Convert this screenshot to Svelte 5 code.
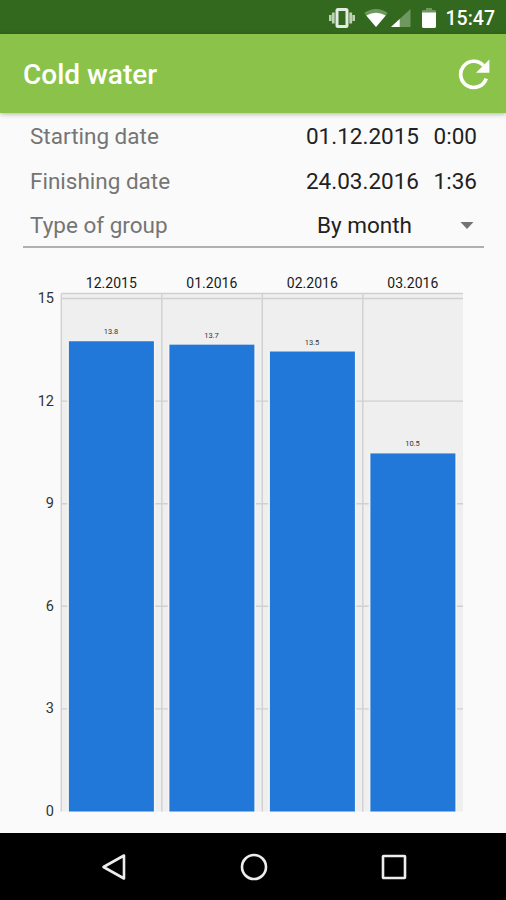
<script lang="ts">
  interface Bar {
    month: string;
    value: number;
    label: string;
  }

  const bars: Bar[] = [
    { month: '12.2015', value: 13.75, label: '13.8' },
    { month: '01.2016', value: 13.65, label: '13.7' },
    { month: '02.2016', value: 13.45, label: '13.5' },
    { month: '03.2016', value: 10.47, label: '10.5' },
  ];

  const ticks = [0, 3, 6, 9, 12, 15];

  // Plot geometry, in svg units
  const left = 61.3;
  const right = 463;
  const top = 45.5;
  const bottom = 563.5;
  const unit = 34.2;
  const step = 100.5;
  const barWidth = 85;

  function y(value: number): number {
    return bottom - value * unit;
  }
</script>

<div class="screen">
  <header class="status">
    <svg class="vibrate" width="26" height="20" viewBox="0 0 26 20">
      <path d="M1.2 7v6M4.3 4.5v11M21.7 4.5v11M24.8 7v6" stroke="#bdd1b5" stroke-width="2.8" />
      <rect x="8" y="1.5" width="10" height="17" rx="1" fill="none" stroke="#e3ece0" stroke-width="3" />
    </svg>
    <svg class="wifi" width="24" height="20" viewBox="0 0 24 20">
      <path d="M12 19L0.3 5Q12 -3 23.7 5z" fill="#6f9860" />
      <path d="M12 19L2.2 7.4Q12 2.2 21.8 7.4z" fill="#fff" />
    </svg>
    <svg class="signal" width="20" height="20" viewBox="0 0 20 20">
      <path d="M0 19L19.5 1v18z" fill="#6f9860" />
      <path d="M0 19L8.7 11v8z" fill="#fff" />
    </svg>
    <svg class="battery" width="14" height="20" viewBox="0 0 14 20">
      <path d="M0 5V3.4q0-1.4 1.4-1.4H4V0h6v2h2.6q1.4 0 1.4 1.4V5z" fill="#6f9860" />
      <path d="M0 4.6h14v14q0 1.4-1.4 1.4H1.4Q0 20 0 18.6z" fill="#fff" />
    </svg>
    <span class="clock">15:47</span>
  </header>

  <div class="toolbar">
    <h1>Cold water</h1>
    <button type="button" class="refresh" aria-label="Refresh">
      <svg width="32" height="32" viewBox="0 0 32 32">
        <path d="M28.2 20.6A13.1 13.1 0 1 1 25.4 7.4" fill="none" stroke="#fff" stroke-width="3.7" />
        <path d="M31.4 1.5v13.3H18z" fill="#fff" />
      </svg>
    </button>
  </div>

  <div class="form">
    <div class="row">
      <span class="label">Starting date</span>
      <span class="date">01.12.2015</span>
      <span class="time">0:00</span>
    </div>
    <div class="row">
      <span class="label">Finishing date</span>
      <span class="date">24.03.2016</span>
      <span class="time">1:36</span>
    </div>
    <div class="row">
      <span class="label">Type of group</span>
      <span class="group">By month</span>
      <svg class="caret" width="14" height="7" viewBox="0 0 14 7">
        <path d="M0.5 0h13L7 7z" fill="#737373" />
      </svg>
    </div>
  </div>

  <svg class="chart" width="506" height="585" viewBox="0 0 506 585">
    <rect x={left} y={top} width={right - left} height={bottom - top} fill="#efefef" />
    <line class="grid" x1={left} x2={right} y1={top} y2={top} />
    {#each ticks as tick}
      {#if tick > 0}
        <line class="grid" x1={left} x2={right} y1={y(tick)} y2={y(tick)} />
      {/if}
      <text class="tick" x="54" y={y(tick) + 4.5}>{tick}</text>
    {/each}
    {#each bars as bar, i}
      {@const x = left + i * step}
      <line class="grid" x1={x} x2={x} y1={top} y2={bottom} />
      <rect class="gap" x={x + 6} y={y(bar.value)} width={barWidth + 3} height={bar.value * unit} />
      <rect class="bar" x={x + 7.6} y={y(bar.value)} width={barWidth} height={bar.value * unit} />
      <text class="value" x={x + 49.7} y={y(bar.value) - 7}>{bar.label}</text>
      <text class="month" x={x + 50} y="40">{bar.month}</text>
    {/each}
  </svg>

  <nav class="navbar">
    <svg width="26" height="28" viewBox="0 0 26 28">
      <path d="M2.5 14L23 2.5v23z" />
    </svg>
    <svg width="28" height="28" viewBox="0 0 28 28">
      <circle cx="14" cy="14" r="12" />
    </svg>
    <svg width="26" height="26" viewBox="0 0 26 26">
      <rect x="2" y="2" width="22" height="22" rx="0.5" />
    </svg>
  </nav>
</div>

<style>
  .screen {
    display: flex;
    flex-direction: column;
    width: 506px;
    height: 900px;
    overflow: hidden;
    background: #fafafa;
    font-family: Roboto, sans-serif;
    color: #212121;
  }

  .status {
    display: flex;
    align-items: center;
    justify-content: flex-end;
    flex: none;
    height: 34px;
    padding: 1px 11px 0 0;
    box-sizing: border-box;
    background: #33691e;
    color: #fff;
  }

  .wifi {
    margin-left: 9px;
  }

  .signal {
    margin-left: 3px;
  }

  .battery {
    margin-left: 11px;
  }

  .clock {
    margin-left: 10px;
    font-size: 19.5px;
    font-weight: 500;
    line-height: 34px;
    padding-top: 2px;
  }

  .toolbar {
    display: flex;
    align-items: center;
    justify-content: space-between;
    flex: none;
    height: 79px;
    padding: 0 16px 0 23px;
    box-sizing: border-box;
    background: #8bc34a;
    box-shadow: 0 1px 5px rgba(0, 0, 0, 0.3);
    z-index: 1;
  }

  h1 {
    margin: 1px 0 0;
    color: #fff;
    font-size: 28px;
    font-weight: 500;
  }

  .refresh {
    padding: 0;
    border: none;
    background: none;
    line-height: 0;
    cursor: pointer;
  }

  .form {
    flex: none;
    height: 135px;
    margin: 0 22px 0 23px;
    padding-top: 1px;
    box-sizing: border-box;
    border-bottom: 2px solid #b0b0b0;
  }

  .row {
    display: flex;
    align-items: center;
    height: 44.5px;
    padding: 0 7px;
    font-size: 22.5px;
  }

  .label {
    flex: 1;
    color: #757575;
  }

  .time {
    width: 58px;
    text-align: right;
  }

  .group {
    margin-right: 48px;
  }

  .caret {
    margin-right: 3px;
  }

  .chart {
    flex: none;
    display: block;
  }

  .grid {
    stroke: #d0d0d0;
    stroke-width: 1.4;
  }

  .bar {
    fill: #2278d8;
  }

  .gap {
    fill: #f6f5f3;
  }

  .tick {
    font-size: 14.5px;
    text-anchor: end;
    fill: #333;
  }

  .month {
    font-size: 14px;
    text-anchor: middle;
    fill: #1a1a1a;
  }

  .value {
    font-size: 7.5px;
    text-anchor: middle;
    fill: #333;
  }

  .navbar {
    display: flex;
    align-items: center;
    justify-content: space-between;
    flex: 1;
    padding: 0 99px 0 101px;
    background: #000;
  }

  .navbar svg {
    fill: none;
    stroke: #ededed;
    stroke-width: 2.6;
    stroke-linejoin: round;
  }
</style>
